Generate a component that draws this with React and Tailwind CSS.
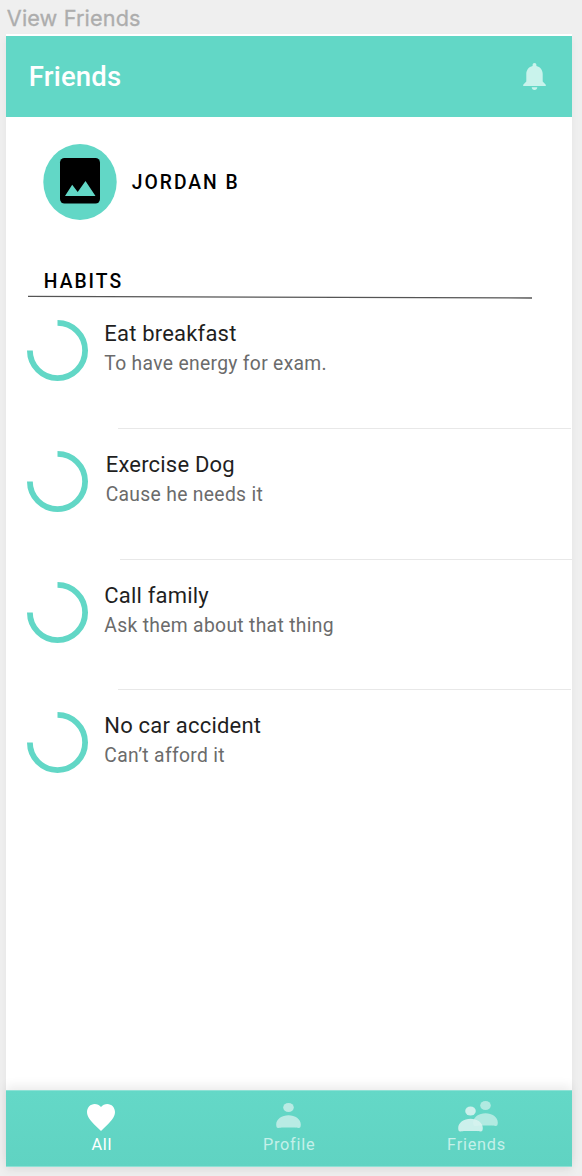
const habits = [
  { title: "Eat breakfast", note: "To have energy for exam.", row: "pl-[98px]", line: "left-[112px] right-[1px]" },
  { title: "Exercise Dog", note: "Cause he needs it", row: "pl-[99.4px]", line: "left-[113.5px] right-0" },
  { title: "Call family", note: "Ask them about that thing", row: "pl-[98px]", line: "left-[112px] right-[1px]" },
  { title: "No car accident", note: "Can’t afford it", row: "pl-[98px]", line: "hidden" },
];

function Bell() {
  return (
    <svg className="h-[27px] w-[23px]" viewBox="0 0 23 27" fill="#c9f3ec">
      <path d="M11.5 0c-1.2 0-1.9.8-1.9 1.9v1C5.800 3.800 3.300 6.700 3.300 11v7.500L.2 21.700V23h22.600v-1.300l-3.100-3.200V11c0-4.300-2.500-7.200-6.300-8.100v-1C13.400.800 12.700 0 11.500 0z" />
      <path d="M8.700 24.200h5.600c0 1.600-1.200 2.700-2.800 2.700s-2.800-1.100-2.800-2.700z" />
    </svg>
  );
}

function Avatar() {
  return (
    <svg className="h-[76px] w-[74px]" viewBox="0 0 74 76">
      <ellipse cx="37" cy="38" rx="36.700" ry="38" fill="#62d7c6" />
      <rect x="17" y="14" width="40" height="45.600" rx="4.500" fill="#000" />
      <path d="M22 52l7.200-11.300 5.500 7.300 7.800-11L52.500 52z" fill="#62d7c6" />
    </svg>
  );
}

function Ring() {
  return (
    <svg className="h-[61px] w-[61px]" viewBox="0 0 61 61">
      <path d="M30.500 2.900A27.600 27.600 0 1 1 2.900 30.500" fill="none" stroke="#62d7c6" strokeWidth="5.800" />
    </svg>
  );
}

function Habit({ habit }) {
  return (
    <li className={`relative h-[130.67px] ${habit.row}`}>
      <span className="absolute left-[21px] top-[22px]"><Ring /></span>
      <h3 className="pt-[21px] text-[22px] leading-[30px] tracking-[0.2px] text-[#1f1f1f]">{habit.title}</h3>
      <p className="text-[19.3px] leading-[30px] tracking-[0.32px] text-[#6b6b6b]">{habit.note}</p>
      <span className={`absolute bottom-0 h-px bg-[#e8e8e8] ${habit.line}`} />
    </li>
  );
}

function Person({ className }) {
  return (
    <g className={className}>
      <ellipse cx="12.500" cy="4.500" rx="5.300" ry="4.500" />
      <path d="M2.300 25C.8 25 .2 24 .2 21.500.2 16.200 6 12.300 12.500 12.300s12.300 3.900 12.300 9.200c0 2.500-.6 3.500-2.100 3.500-2 0-3-.4-4.500-.4H6.800c-1.500 0-2.500.4-4.500.4z" />
    </g>
  );
}

export default function App() {
  return (
    <div className="flex h-[1176px] w-[582px] flex-col overflow-hidden bg-[#efefef] pl-[6.300px] font-['Roboto',sans-serif]">
      <div className="h-[34px] shrink-0 whitespace-nowrap pl-[0.5px] pt-[4px] font-['Inter',sans-serif] text-[21.700px] leading-[28px] tracking-[0.12px] text-[#adadad] [-webkit-text-stroke:0.3px_#adadad]">View Friends</div>
      <main className="flex h-[1132.500px] w-[565.700px] shrink-0 flex-col bg-white pt-[2px] shadow-[0_5px_8px_rgba(0,0,0,0.05)]">
        <header className="flex h-[81px] shrink-0 items-center justify-between bg-[#62d7c6] pl-[22.500px] pr-[26px]">
          <h1 className="text-[27.500px] font-medium tracking-[0.2px] text-white">Friends</h1>
          <Bell />
        </header>
        <section className="flex h-[130px] shrink-0 items-center gap-[14.500px] pl-[37px]">
          <Avatar />
          <h2 className="pt-[2px] text-[19.300px] font-medium tracking-[2px] text-black">JORDAN B</h2>
        </section>
        <section className="flex grow flex-col">
          <div className="h-[51.300px] shrink-0 pt-[19px]">
            <h2 className="h-[29px] pl-[37.500px] text-[19.300px] font-medium leading-[32px] tracking-[2px] text-black">HABITS</h2>
            <svg className="ml-[22px] h-[4px] w-[504px]" viewBox="0 0 504 4">
              <line x1="0" y1="1.300" x2="504" y2="3" stroke="#555" strokeWidth="1.350" />
            </svg>
          </div>
          <ul>
            {habits.map((habit) => <Habit key={habit.title} habit={habit} />)}
          </ul>
        </section>
        <nav className="flex h-[77px] shrink-0 justify-between border-y border-[#8ee1d5] bg-linear-to-b from-[#64d8c7] to-[#60d3c2] pl-[65px] pr-[66px] text-center text-[16.300px] leading-[20px] tracking-[0.75px] text-[#c4f0e9] shadow-[0_-4px_10px_rgba(0,0,0,0.08)]">
          <a className="flex w-[60px] flex-col items-center pt-[13px] text-white">
            <svg className="mb-[4px] h-[27px] w-[28px]" viewBox="2 3 20 18.350" preserveAspectRatio="none" fill="white">
              <path d="m12 21.350-1.450-1.320C5.400 15.360 2 12.280 2 8.500 2 5.420 4.420 3 7.500 3c1.740 0 3.410.81 4.500 2.090C13.090 3.810 14.760 3 16.500 3 19.580 3 22 5.420 22 8.500c0 3.780-3.400 6.860-8.550 11.540z" />
            </svg>
            <span className="pl-px">All</span>
          </a>
          <a className="flex w-[60px] flex-col items-center pt-[12px]">
            <svg className="mb-[7px] h-[25px] w-[25px]" viewBox="0 0 25 25"><Person className="fill-[#b9ebe4]" /></svg>
            <span className="pl-px">Profile</span>
          </a>
          <a className="flex w-[60px] flex-col items-center pt-[10px]">
            <svg className="mb-[3px] ml-[4px] h-[31px] w-[40px]" viewBox="0 0 40 31">
              <g transform="translate(15 0)"><Person className="fill-[#b1eae1]" /></g>
              <g transform="translate(0 5.500)"><Person className="fill-[#d8f3ef]/90" /></g>
            </svg>
            <span className="pl-px">Friends</span>
          </a>
        </nav>
      </main>
    </div>
  );
}
